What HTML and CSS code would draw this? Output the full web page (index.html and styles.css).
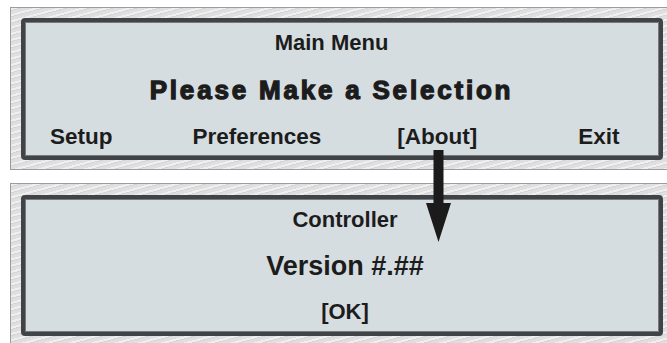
FILE: index.html
```html
<!DOCTYPE html>
<html>
<head>
    <link rel="stylesheet" href="styles.css">
  </head>
  <body>
    <div class="panel top">
      <div class="screen">
        <div class="row title">Main Menu</div>
        <div class="row big">Please Make a Selection</div>
        <div class="row menu">
          <span class="item setup">Setup</span>
          <span class="item prefs">Preferences</span>
          <span class="item about">[About]</span>
          <span class="item exit">Exit</span>
        </div>
      </div>
    </div>

    <div class="panel bottom">
      <div class="screen">
        <div class="row title">Controller</div>
        <div class="row version">Version #.##</div>
        <div class="row title">[OK]</div>
      </div>
    </div>

    <svg class="arrow" width="25" height="92" viewBox="0 0 25 92">
      <polygon points="7.5,0 17.5,0 17.5,53 25,53 12.5,92 0,53 7.5,53" fill="#1b1b1b" />
    </svg>
  </body>
</html>
```

FILE: styles.css
```css
body {
    margin: 0;
    background-color: #ffffff;
    font-family: "Liberation Sans", Arial, sans-serif;
    font-weight: bold;
    color: #1c1c1c;
    overflow: hidden;
    height: 343px;
  }

  .panel {
    width: 664px;
    margin-left: 10px;
    padding: 10px;
    border: 1px solid #9c9c9e;
    background-color: #dfdfe1;
    background-image: repeating-linear-gradient(165deg, rgba(255,255,255,0.5) 0 2px, rgba(170,170,176,0.2) 2px 3px, rgba(255,255,255,0) 3px 6px);
  }

  .panel.top {
    margin-top: 7px;
    padding-bottom: 9px;
  }

  .panel.bottom {
    margin-top: 13px;
    padding-top: 11px;
  }

  .screen {
    width: 642px;
    height: 142px;
    box-sizing: border-box;
    border: 4px solid #414447;
    border-radius: 4px;
    background-color: #d6dde1;
    box-shadow: inset 0 0 0 1px #767a7e;
    display: flex;
    flex-direction: column;
    padding-top: 6px;
    gap: 17px;
  }

  .top .screen {
    padding-right: 21px;
  }

  .bottom .screen {
    height: 141px;
    padding-left: 6px;
    gap: 16px;
  }

  .row {
    height: 30px;
    line-height: 30px;
    text-align: center;
    white-space: nowrap;
  }

  .title {
    font-size: 22px;
  }

  .big {
    font-size: 26px;
    letter-spacing: 2.8px;
    -webkit-text-stroke: 1.3px #1c1c1c;
    color: #1c1c1c;
  }

  .version {
    font-size: 27px;
  }

  .menu {
    display: flex;
    font-size: 22.5px;
    text-align: left;
  }

  .setup {
    margin-left: 25px;
  }

  .prefs {
    margin-left: 80px;
  }

  .about {
    margin-left: 76px;
  }

  .exit {
    margin-left: 101px;
  }

  .arrow {
    position: absolute;
    left: 426px;
    top: 150px;
  }
```
